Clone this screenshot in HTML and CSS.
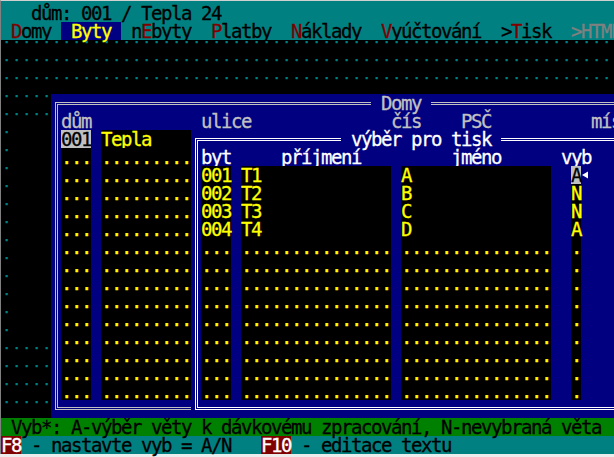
FILE: index.html
```html
<!DOCTYPE html>
<html lang="cs">
<head>
<meta charset="utf-8">
<title>Byty</title>
<link rel="stylesheet" href="styles.css">
</head>
<body>
<div class="frame">
<div class="topgap"></div>
<div class="screen">
<div class="row teal">   dům: 001 / Tepla 24</div>
<div class="row teal"> <span class="hk">D</span>omy <span class="hl"> Byty </span> n<span class="hk">E</span>byty  <span class="hk">P</span>latby  <span class="hk">N</span>áklady  <span class="hk">V</span>yúčtování  &gt;<span class="hk">T</span>isk  <span class="dis">&gt;HTML</span></div>
<div class="row bg">˙˙˙˙˙˙˙˙˙˙˙˙˙˙˙˙˙˙˙˙˙˙˙˙˙˙˙˙˙˙˙˙˙˙˙˙˙˙˙˙˙˙˙˙˙˙˙˙˙˙˙˙˙˙˙˙˙˙˙˙˙˙˙˙˙˙˙˙˙˙˙˙˙˙˙˙˙˙˙˙</div>
<div class="row bg">˙˙˙˙˙˙˙˙˙˙˙˙˙˙˙˙˙˙˙˙˙˙˙˙˙˙˙˙˙˙˙˙˙˙˙˙˙˙˙˙˙˙˙˙˙˙˙˙˙˙˙˙˙˙˙˙˙˙˙˙˙˙˙˙˙˙˙˙˙˙˙˙˙˙˙˙˙˙˙˙</div>
<div class="row bg">˙˙˙˙˙˙˙˙˙˙˙˙˙˙˙˙˙˙˙˙˙˙˙˙˙˙˙˙˙˙˙˙˙˙˙˙˙˙˙˙˙˙˙˙˙˙˙˙˙˙˙˙˙˙˙˙˙˙˙˙˙˙˙˙˙˙˙˙˙˙˙˙˙˙˙˙˙˙˙˙</div>
<div class="row bg">˙˙˙˙˙</div>
<div class="row bg">˙˙˙˙˙</div>
<div class="row bg">˙</div>
<div class="row bg">˙</div>
<div class="row bg">˙</div>
<div class="row bg">˙</div>
<div class="row bg">˙</div>
<div class="row bg">˙</div>
<div class="row bg">˙</div>
<div class="row bg">˙</div>
<div class="row bg">˙</div>
<div class="row bg">˙</div>
<div class="row bg">˙</div>
<div class="row bg">˙</div>
<div class="row bg">˙˙˙˙˙</div>
<div class="row bg">˙˙˙˙˙</div>
<div class="row bg">˙˙˙˙˙</div>
<div class="row bg">˙˙˙˙˙</div>
<div class="row green"> Vyb*: A-výběr věty k dávkovému zpracování, N-nevybraná věta</div>
<div class="row teal"><span class="fk">F8</span> - nastavte vyb = A/N   <span class="fk">F10</span> - editace textu</div>

<div class="win domy">
<div class="row">                                <span class="ttl"> Domy </span></div>
<div class="row"> dům           ulice              čís    PSČ          místo</div>
<div class="row"> <span class="sel">001</span> <span class="f">Tepla    </span></div>
<div class="row"> <span class="f">...</span> <span class="f">.........</span></div>
<div class="row"> <span class="f">...</span> <span class="f">.........</span></div>
<div class="row"> <span class="f">...</span> <span class="f">.........</span></div>
<div class="row"> <span class="f">...</span> <span class="f">.........</span></div>
<div class="row"> <span class="f">...</span> <span class="f">.........</span></div>
<div class="row"> <span class="f">...</span> <span class="f">.........</span></div>
<div class="row"> <span class="f">...</span> <span class="f">.........</span></div>
<div class="row"> <span class="f">...</span> <span class="f">.........</span></div>
<div class="row"> <span class="f">...</span> <span class="f">.........</span></div>
<div class="row"> <span class="f">...</span> <span class="f">.........</span></div>
<div class="row"> <span class="f">...</span> <span class="f">.........</span></div>
<div class="row"> <span class="f">...</span> <span class="f">.........</span></div>
<div class="row"> <span class="f">...</span> <span class="f">.........</span></div>
<div class="row"> <span class="f">...</span> <span class="f">.........</span></div>
<div class="row"></div>
</div>

<div class="win tisk">
<div class="row">               <span class="ttl"> výběr pro tisk </span></div>
<div class="row"> byt     příjmení         jméno      vyb</div>
<div class="row"> <span class="f">001</span> <span class="f">T1             </span> <span class="f">A              </span>  <span class="sel">A</span><span class="ptr"><svg width="10" height="18" viewBox="0 0 10 18"><polygon points="1,9 7,5.5 7,12.5" fill="#fff"/></svg></span></div>
<div class="row"> <span class="f">002</span> <span class="f">T2             </span> <span class="f">B              </span>  <span class="f">N</span></div>
<div class="row"> <span class="f">003</span> <span class="f">T3             </span> <span class="f">C              </span>  <span class="f">N</span></div>
<div class="row"> <span class="f">004</span> <span class="f">T4             </span> <span class="f">D              </span>  <span class="f">A</span></div>
<div class="row"> <span class="f">...</span> <span class="f">...............</span> <span class="f">...............</span>  <span class="f">.</span></div>
<div class="row"> <span class="f">...</span> <span class="f">...............</span> <span class="f">...............</span>  <span class="f">.</span></div>
<div class="row"> <span class="f">...</span> <span class="f">...............</span> <span class="f">...............</span>  <span class="f">.</span></div>
<div class="row"> <span class="f">...</span> <span class="f">...............</span> <span class="f">...............</span>  <span class="f">.</span></div>
<div class="row"> <span class="f">...</span> <span class="f">...............</span> <span class="f">...............</span>  <span class="f">.</span></div>
<div class="row"> <span class="f">...</span> <span class="f">...............</span> <span class="f">...............</span>  <span class="f">.</span></div>
<div class="row"> <span class="f">...</span> <span class="f">...............</span> <span class="f">...............</span>  <span class="f">.</span></div>
<div class="row"> <span class="f">...</span> <span class="f">...............</span> <span class="f">...............</span>  <span class="f">.</span></div>
<div class="row"> <span class="f">...</span> <span class="f">...............</span> <span class="f">...............</span>  <span class="f">.</span></div>
<div class="row"></div>
</div>
</div>
</div>
</body>
</html>
```
FILE: styles.css
```css
html, body {
  margin: 0;
  padding: 0;
  width: 614px;
  height: 457px;
  overflow: hidden;
  background: #ececec;
}
.frame {
  width: 800px;
  border-left: 1px solid #808080;
  border-top: 1px solid #d0d0d0;
}
.topgap {
  height: 3px;
  background: #008080;
}
.screen {
  position: relative;
  width: 800px;
  height: 450px;
  background: #000;
  font-family: "DejaVu Sans Mono", monospace;
  font-size: 19px;
  letter-spacing: -1.439px;
  line-height: 18px;
  -webkit-text-stroke: 0.3px currentColor;
}
.row {
  height: 18px;
  white-space: pre;
}
.row span {
  display: inline-block;
  height: 18px;
  vertical-align: top;
}
.teal { background: #008080; color: #000; }
.green { background: #008000; color: #000; }
.bg { color: #008080; }
.hk { color: #800000; }
.hl { background: #000080; color: #ffff00; }
.dis { color: #808080; }
.fk { background: #800000; color: #fff; }

.win {
  position: absolute;
  background: #000080;
  color: #c0c0c0;
}
.win::before {
  content: "";
  position: absolute;
  top: 8px;
  left: 4px;
  right: 4px;
  bottom: 8px;
  border: 3px double #c0c0c0;
}
.win .row { position: relative; }
.domy {
  left: 50px;
  top: 90px;
  width: 750px;
  height: 324px;
}
.tisk {
  left: 190px;
  top: 126px;
  width: 610px;
  height: 288px;
  color: #fff;
}
.tisk::before { border-color: #fff; }
.ttl { background: #000080; }
.f { background: #000; color: #ffff00; }
.sel { background: #c0c0c0; color: #000; }
.ptr { width: 10px; }
.ptr svg { display: block; }
```
